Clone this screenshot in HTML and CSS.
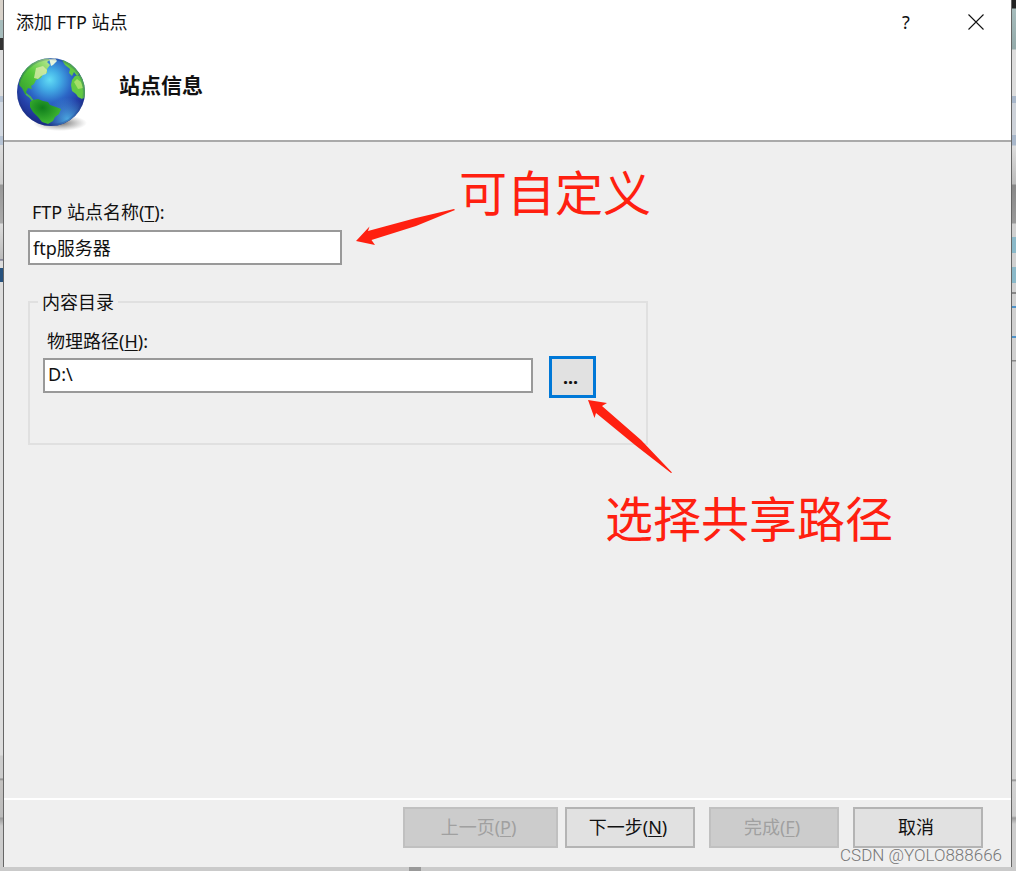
FILE: index.html
```html
<!DOCTYPE html>
<html lang="zh-CN">
<head>
  <meta charset="UTF-8" />
  <meta name="viewport" content="width=device-width, initial-scale=1.0"/>
  <title>添加 FTP 站点</title>
  <link rel="stylesheet" href="styles.css">
</head>
<body>

  <div class="edge edge-left"></div>

  <main class="dialog">

    <div class="titlebar">
      <span class="title">添加 FTP 站点</span>
      <button type="button" class="title-btn" aria-label="帮助">?</button>
      <button type="button" class="title-btn" aria-label="关闭">
        <svg width="16" height="16" viewBox="0 0 16 16" aria-hidden="true">
          <path d="M0.5 0.5L15.5 15.5M15.5 0.5L0.5 15.5" stroke="#111" stroke-width="1.1" fill="none"/>
        </svg>
      </button>
    </div>

    <header class="header">
      <svg class="globe" width="72" height="76" viewBox="0 0 72 76" aria-hidden="true">
        <defs>
          <radialGradient id="sea" cx="0.48" cy="0.32" r="0.66">
            <stop offset="0" stop-color="#62dcf5"/>
            <stop offset="0.22" stop-color="#43aee6"/>
            <stop offset="0.5" stop-color="#2c66c6"/>
            <stop offset="0.75" stop-color="#2440a8"/>
            <stop offset="1" stop-color="#1b2b86"/>
          </radialGradient>
          <radialGradient id="glow" cx="0.74" cy="0.9" r="0.32">
            <stop offset="0" stop-color="#4fb4ea" stop-opacity="0.9"/>
            <stop offset="1" stop-color="#4fb4ea" stop-opacity="0"/>
          </radialGradient>
          <linearGradient id="north" x1="0" y1="1" x2="1" y2="0">
            <stop offset="0" stop-color="#2f9a2c"/>
            <stop offset="0.5" stop-color="#55c83a"/>
            <stop offset="1" stop-color="#c4ec9a"/>
          </linearGradient>
          <radialGradient id="south" cx="0.4" cy="0.35" r="0.7">
            <stop offset="0" stop-color="#0f7d1c"/>
            <stop offset="1" stop-color="#45bd35"/>
          </radialGradient>
          <radialGradient id="shade">
            <stop offset="0" stop-color="#444" stop-opacity="0.8"/>
            <stop offset="1" stop-color="#777" stop-opacity="0"/>
          </radialGradient>
          <clipPath id="ball"><circle cx="35" cy="36" r="34"/></clipPath>
        </defs>
        <ellipse cx="44" cy="67" rx="27" ry="8" fill="url(#shade)"/>
        <circle cx="35" cy="36" r="34" fill="url(#sea)"/>
        <g clip-path="url(#ball)">
          <circle cx="35" cy="36" r="34" fill="url(#glow)"/>
          <path d="M3 27L6 16L14 8L23 3L30 2L35 3L31 6L34 9L31 13L31 17L27 18L25 22L20 24L18 28L15 30L16 33L12 32L10 36L13 40L9 38L6 32L3 29Z" fill="url(#north)"/>
          <path d="M20 12L27 10L31 14L30 18L25 20L22 23L18 22Z" fill="#e0edb0" opacity="0.75"/>
          <path d="M33 3L39 2L41 5L37 9L35 10L34 6Z" fill="#e7f4db"/>
          <path d="M10 38L14 41L17 45" stroke="#49b05a" stroke-width="2" fill="none"/>
          <path d="M14 46L17 44L22 43L27 45L32 46L34 49L40 51L45 53L43 58L39 61L37 65L32 68L26 66L22 61L17 56L14 51Z" fill="url(#south)"/>
          <path d="M46 4L54 6L60 12L64 18L61 20L58 16L56 20L53 17L54 13L49 9Z" fill="#63ca43"/>
          <path d="M56 24L59 20L65 19L70 26L70 41L66 43L62 41L60 38L56 35L55 29Z" fill="#62c944"/>
          <path d="M58 26L61 23L65 26L67 32L62 33Z" fill="#a4df68"/>
        </g>
        <circle cx="35" cy="36" r="33" fill="none" stroke="#1c347f" stroke-opacity="0.25" stroke-width="2"/>
      </svg>
      <h1>站点信息</h1>
    </header>

    <form class="content">
      <div class="field">
        <label for="siteName">FTP 站点名称(<u>T</u>):</label>
        <input type="text" id="siteName" class="site-name" value="ftp服务器">
      </div>

      <fieldset class="group">
        <legend>内容目录</legend>
        <label for="sitePath">物理路径(<u>H</u>):</label>
        <div class="path-row">
          <input type="text" id="sitePath" value="D:\">
          <button type="button" class="browse">...</button>
        </div>
      </fieldset>
    </form>

    <footer class="footer">
      <button type="button" class="wide" disabled>上一页(<u>P</u>)</button>
      <button type="button">下一步(<u>N</u>)</button>
      <button type="button" disabled>完成(<u>F</u>)</button>
      <button type="button">取消</button>
    </footer>

    <!-- notes drawn over the dialog -->
    <svg class="arrow arrow-name" width="100" height="38" viewBox="0 0 100 38" aria-hidden="true">
      <path d="M0 33L13.5 18.5L12 23L60 10L98 1L99 2L60 18L15.500 32L19 37Z"/>
    </svg>
    <p class="note note-name">可自定义</p>
    <svg class="arrow arrow-path" width="86" height="74" viewBox="0 0 86 74" aria-hidden="true">
      <path d="M0 0L19 3L14 6L53 40L84 72.5L83 73L47 45L8 13L6.5 18Z"/>
    </svg>
    <p class="note note-path">选择共享路径</p>
    <span class="watermark">CSDN @YOLO888666</span>
  </main>

  <div class="edge edge-right"></div>

</body>
</html>
```
FILE: styles.css
```css
* {
  box-sizing: border-box;
}

body {
  margin: 0;
  padding-bottom: 4px;
  min-height: 100vh;
  display: flex;
  font-family: "Noto Sans", "Noto Sans CJK SC", sans-serif;
  font-size: 18px;
  line-height: 24px;
  color: #111;
  background: linear-gradient(90deg, transparent 409px, #999 409px, #999 421px, transparent 421px) bottom / 100% 4px no-repeat, #cacaca;
}

/* slivers of the window behind the dialog */
.edge {
  width: 3px;
  flex: none;
}

.edge-left {
  background: linear-gradient(#d8d2ca 20px, #a6bcbc 20px, #a6bcbc 38px, #333 38px, #333 50px, #ddd 50px, #ddd 96px, #b6c3d4 96px, #b6c3d4 102px, #d4dae2 102px, #d4dae2 136px, #b6c3d4 136px, #b6c3d4 145px, #ddd 145px, #ccc 184px, #999 185px, #aaa 223px, #ddd 224px, #bbb 259px, #557 260px, #ddd 261px, #ddd 268px, #27527e 268px, #27527e 282px, #ddd 282px, #ddd 755px, #ccc 756px, #ccc 778px, #888 779px, #c4c2c0 781px, #bbb 817px, #999 818px, #ccc 826px);
}

.edge-right {
  width: 4px;
  background: linear-gradient(#222 8px, #a6bcbc 9px, #94aaaa 49px, #ddd 50px, #ddd 96px, #a8b7ca 96px, #a8b7ca 103px, #cdd2d9 103px, #cdd2d9 135px, #a8b7ca 135px, #a8b7ca 145px, #ddd 146px, #bbb 184px, #888 185px, #999 223px, #d0d0d0 224px, #d0d0d0 237px, #8bb9c9 237px, #8bb9c9 253px, #d0d0d0 253px, #d0d0d0 267px, #8bb9c9 267px, #8bb9c9 283px, #d0d0d0 283px, #d0d0d0 292px, #888 292px, #888 294px, #d0d0d0 294px, #d0d0d0 306px, #4f93c9 306px, #4f93c9 308px, #d0d0d0 308px, #d0d0d0 336px, #4f93c9 336px, #4f93c9 338px, #d0d0d0 338px, #d0d0d0 360px, #888 360px, #888 361px, #d2d2d2 362px, #d2d2d2 779px, #888 780px, #d2d2d2 782px, #ccc 816px, #999 818px, #ccc 824px);
}

.dialog {
  position: relative;
  flex: 1;
  display: flex;
  flex-direction: column;
  background: #efefef;
  border: solid #666;
  border-width: 0 1px;
}

.titlebar {
  display: flex;
  align-items: center;
  height: 44px;
  padding-left: 12px;
  background: #fff;
}

.title {
  flex: 1;
}

.title-btn {
  width: 70px;
  height: 44px;
  padding: 0;
  border: none;
  background: none;
  font: inherit;
  color: inherit;
}

.title-btn svg {
  display: block;
  margin: auto;
}

.header {
  display: flex;
  gap: 31px;
  height: 98px;
  padding: 12px 12px 0;
  background: #fff;
  border-bottom: 2px solid #aaa;
}

.header h1 {
  margin: 15px 0 0;
  font-size: 21px;
  line-height: 28px;
}

.content {
  flex: 1;
  padding: 58px 24px 0;
}

label {
  display: block;
  padding-left: 4px;
}

u {
  text-underline-offset: 2px;
}

input {
  display: block;
  height: 35px;
  padding: 0 3px 2px;
  border: 2px solid #999;
  background: #fff;
  font: inherit;
  color: inherit;
}

.site-name {
  width: 314px;
  margin-top: 6px;
}

.group {
  width: 620px;
  height: 155px;
  margin: 25px 0 0;
  padding: 15px 13px 0;
  border: 2px solid #e0e0e0;
}

.group legend {
  margin-left: -5px;
  padding: 0 4px;
}

.path-row {
  display: flex;
  align-items: center;
  gap: 16px;
  padding-top: 3px;
}

.path-row input {
  width: 490px;
  margin-bottom: 4px;
}

.browse {
  width: 47px;
  height: 42px;
  padding: 0 4px 0 0;
  border: 3px solid #0078d7;
  background: #e1e1e1;
  font: inherit;
  font-weight: bold;
  color: #111;
}

.footer {
  display: flex;
  justify-content: flex-end;
  gap: 14px;
  height: 69px;
  padding: 7px 28px 0;
  border-top: 2px solid #fff;
}

.footer button {
  width: 130px;
  height: 41px;
  padding: 0 4px 2px 0;
  border: 2px solid #b4b4b4;
  background: #e1e1e1;
  font: inherit;
  color: #111;
}

.footer button:disabled {
  border-color: #c0c0c0;
  background: #ccc;
  color: #a0a0a0;
}

.footer .wide {
  width: 155px;
  margin-right: -7px;
}

.arrow {
  position: absolute;
  fill: #ff2010;
}

.arrow-name {
  left: 352px;
  top: 208px;
}

.arrow-path {
  left: 584px;
  top: 400px;
}

.note {
  position: absolute;
  margin: 0;
  font-size: 48px;
  line-height: 64px;
  color: #ff2010;
  white-space: nowrap;
}

.note-name {
  left: 455px;
  top: 161px;
}

.note-path {
  left: 601px;
  top: 487px;
}

.watermark {
  position: absolute;
  right: 9px;
  bottom: 0;
  font-family: Roboto, sans-serif;
  font-size: 17px;
  font-weight: 300;
  color: #777;
}
```
